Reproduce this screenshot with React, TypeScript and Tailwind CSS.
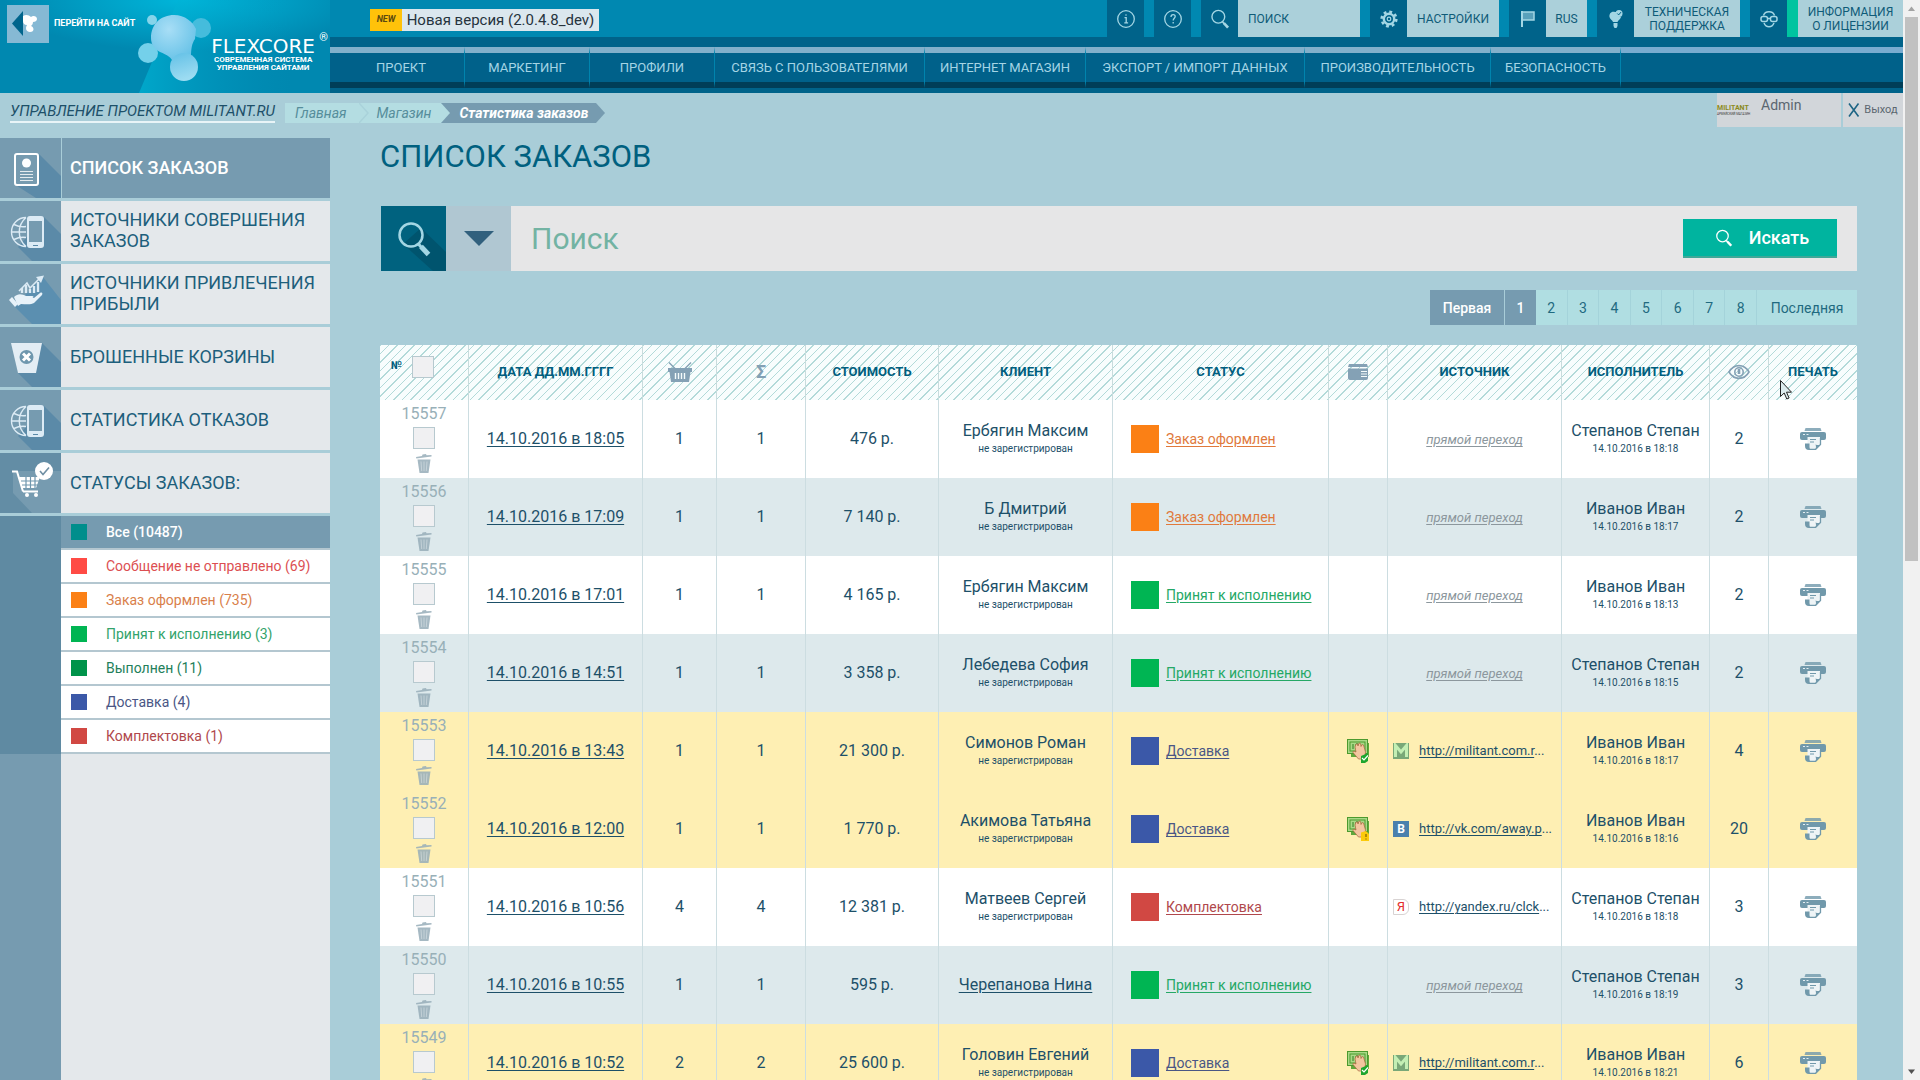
import { useState } from 'react';
import type { ReactNode } from 'react';

type Source = { icon: 'militant' | 'vk' | 'yandex'; label: string } | null;

type Order = {
  id: number;
  date: string;
  items: number;
  total: number;
  price: string;
  client: string;
  registered?: boolean;
  status: keyof typeof statusStyles;
  payment?: 'paid' | 'pending';
  source: Source;
  manager: string;
  managedAt: string;
  views: number;
  tone: keyof typeof rowTones;
};

const statusStyles = {
  'Заказ оформлен': { box: 'bg-[#fb8015]', text: 'text-[#e0793c]' },
  'Принят к исполнению': { box: 'bg-[#00b553]', text: 'text-[#25a866]' },
  'Доставка': { box: 'bg-[#3b58a8]', text: 'text-[#4a5685]' },
  'Комплектовка': { box: 'bg-[#d14843]', text: 'text-[#b0484c]' },
};

const rowTones = {
  white: 'bg-white',
  blue: 'bg-[#dde9ec]',
  yellow: 'bg-[#feefb3]',
};

const militant: Source = { icon: 'militant', label: 'http://militant.com.r' };

const orders: Order[] = [
  { id: 15557, date: '14.10.2016 в 18:05', items: 1, total: 1, price: '476 р.', client: 'Ербягин Максим', status: 'Заказ оформлен', source: null, manager: 'Степанов Степан', managedAt: '14.10.2016 в 18:18', views: 2, tone: 'white' },
  { id: 15556, date: '14.10.2016 в 17:09', items: 1, total: 1, price: '7 140 р.', client: 'Б Дмитрий', status: 'Заказ оформлен', source: null, manager: 'Иванов Иван', managedAt: '14.10.2016 в 18:17', views: 2, tone: 'blue' },
  { id: 15555, date: '14.10.2016 в 17:01', items: 1, total: 1, price: '4 165 р.', client: 'Ербягин Максим', status: 'Принят к исполнению', source: null, manager: 'Иванов Иван', managedAt: '14.10.2016 в 18:13', views: 2, tone: 'white' },
  { id: 15554, date: '14.10.2016 в 14:51', items: 1, total: 1, price: '3 358 р.', client: 'Лебедева София', status: 'Принят к исполнению', source: null, manager: 'Степанов Степан', managedAt: '14.10.2016 в 18:15', views: 2, tone: 'blue' },
  { id: 15553, date: '14.10.2016 в 13:43', items: 1, total: 1, price: '21 300 р.', client: 'Симонов Роман', status: 'Доставка', payment: 'paid', source: militant, manager: 'Иванов Иван', managedAt: '14.10.2016 в 18:17', views: 4, tone: 'yellow' },
  { id: 15552, date: '14.10.2016 в 12:00', items: 1, total: 1, price: '1 770 р.', client: 'Акимова Татьяна', status: 'Доставка', payment: 'pending', source: { icon: 'vk', label: 'http://vk.com/away.p' }, manager: 'Иванов Иван', managedAt: '14.10.2016 в 18:16', views: 20, tone: 'yellow' },
  { id: 15551, date: '14.10.2016 в 10:56', items: 4, total: 4, price: '12 381 р.', client: 'Матвеев Сергей', status: 'Комплектовка', source: { icon: 'yandex', label: 'http://yandex.ru/clck' }, manager: 'Степанов Степан', managedAt: '14.10.2016 в 18:18', views: 3, tone: 'white' },
  { id: 15550, date: '14.10.2016 в 10:55', items: 1, total: 1, price: '595 р.', client: 'Черепанова Нина', registered: true, status: 'Принят к исполнению', source: null, manager: 'Степанов Степан', managedAt: '14.10.2016 в 18:19', views: 3, tone: 'blue' },
  { id: 15549, date: '14.10.2016 в 10:52', items: 2, total: 2, price: '25 600 р.', client: 'Головин Евгений', status: 'Доставка', payment: 'paid', source: militant, manager: 'Иванов Иван', managedAt: '14.10.2016 в 18:21', views: 6, tone: 'yellow' },
];

const menu = [
  { label: 'ПРОЕКТ', width: 'w-[135px] pl-2' },
  { label: 'МАРКЕТИНГ', width: 'w-[125px]' },
  { label: 'ПРОФИЛИ', width: 'w-[125px]' },
  { label: 'СВЯЗЬ С ПОЛЬЗОВАТЕЛЯМИ', width: 'w-[210px]' },
  { label: 'ИНТЕРНЕТ МАГАЗИН', width: 'w-[161px]' },
  { label: 'ЭКСПОРТ / ИМПОРТ ДАННЫХ', width: 'w-[219px]' },
  { label: 'ПРОИЗВОДИТЕЛЬНОСТЬ', width: 'w-[186px]' },
  { label: 'БЕЗОПАСНОСТЬ', width: 'w-[130px]' },
];

const filters = [
  { label: 'Все (10487)', box: 'bg-[#008e8c]', text: 'text-white font-medium', row: 'bg-[#769bb0]' },
  { label: 'Сообщение не отправлено (69)', box: 'bg-[#ff4b45]', text: 'text-[#dc4f52]', row: 'bg-white' },
  { label: 'Заказ оформлен (735)', box: 'bg-[#fb8015]', text: 'text-[#d97f4b]', row: 'bg-white' },
  { label: 'Принят к исполнению (3)', box: 'bg-[#00b553]', text: 'text-[#33a36b]', row: 'bg-white' },
  { label: 'Выполнен (11)', box: 'bg-[#00934a]', text: 'text-[#23805a]', row: 'bg-white' },
  { label: 'Доставка (4)', box: 'bg-[#3b58a8]', text: 'text-[#4a5685]', row: 'bg-white' },
  { label: 'Комплектовка (1)', box: 'bg-[#d14843]', text: 'text-[#b0484c]', row: 'bg-white' },
];

export default function App() {
  return (
    <div className="flex h-screen overflow-hidden bg-[#a9cdd8] font-['Roboto','Liberation_Sans',sans-serif] text-[#1d5069]">
      <div className="flex min-w-0 flex-1 flex-col">
        <Header />
        <Breadcrumbs />
        <div className="flex min-h-0 flex-1">
          <Sidebar />
          <OrdersPage />
        </div>
      </div>
      <Scrollbar />
      <MouseCursor />
    </div>
  );
}

function Header() {
  return (
    <header className="flex h-[93px] shrink-0 bg-[#00638a]">
      <Logo />
      <div className="min-w-0 flex-1">
        <div className="flex h-[37px] items-start justify-between bg-[#0088b1] pl-10">
          <a href="#version" className="mt-[9px] flex h-[22px] items-center bg-[#dbe7ee] text-[#26333d]">
            <span className="flex h-full w-8 items-center justify-center bg-[#ffc20a] text-[9px] font-bold italic text-[#5b4a10]">NEW</span>
            <span className="w-[197px] text-center text-[15px]">Новая версия (2.0.4.8_dev)</span>
          </a>
          <Toolbar />
        </div>
        <nav className="flex pt-[10px]">
          {menu.map((item) => (
            <a
              key={item.label}
              href="#menu"
              className={`${item.width} flex h-[41px] shrink-0 items-center justify-center border-t-6 border-r border-b-6 border-t-[#82b0cb] border-r-[#0084ae] border-b-[#003e58] bg-[#00618a] text-[13px] whitespace-nowrap text-[#a5d5e5]`}
            >
              {item.label}
            </a>
          ))}
          <div className="h-[41px] flex-1 border-t-6 border-b-6 border-t-[#79acd0] border-b-[#003e58] bg-[#00618a]" />
        </nav>
      </div>
    </header>
  );
}

function Logo() {
  return (
    <div className="relative flex w-[330px] shrink-0 overflow-hidden bg-[#0088b0]">
      <svg className="absolute inset-0 h-full w-full" viewBox="0 0 330 93" preserveAspectRatio="none" aria-hidden="true">
        <defs>
          <radialGradient id="logo-glow" cx="0.56" cy="0" r="0.55">
            <stop offset="0" stopColor="#00b6da" />
            <stop offset="1" stopColor="#0088b0" />
          </radialGradient>
          <linearGradient id="logo-beam" x1="0" x2="1">
            <stop offset="0" stopColor="#00bcdc" stopOpacity="0.6" />
            <stop offset="0.8" stopColor="#0096be" stopOpacity="0" />
          </linearGradient>
          <radialGradient id="logo-drop" cx="0.4" cy="0.3" r="0.75">
            <stop offset="0" stopColor="#a8def6" />
            <stop offset="1" stopColor="#62c0e6" />
          </radialGradient>
          <linearGradient id="logo-foot" x1="0" y1="0" x2="0.3" y2="1">
            <stop offset="0" stopColor="#62c0e6" />
            <stop offset="1" stopColor="#9ddcf2" />
          </linearGradient>
        </defs>
        <rect width="330" height="93" fill="url(#logo-glow)" />
        <path d="M178 0H330V93H139Z" fill="url(#logo-beam)" />
        <circle cx="152" cy="20" r="5" fill="#86d4ea" />
        <circle cx="201" cy="28" r="10" fill="#45bcdc" />
        <circle cx="148" cy="53" r="10" fill="#74d0ea" />
        <path d="M151 38c0-14 10-23 23-23 11 0 19 7 22 14l-1 10c-3 4-4 10-4 18l-18 6c-1-6-6-8-13-11-6-3-9-8-9-14Z" fill="url(#logo-drop)" />
        <circle cx="184" cy="67" r="14" fill="url(#logo-foot)" />
      </svg>
      <a href="#site" className="relative mt-[5px] ml-[7px] flex h-[38px] items-center gap-[5px] text-[9px] font-bold text-white">
        <svg className="h-[38px] w-[42px] bg-[#86b9d4]" viewBox="0 0 42 38" aria-hidden="true">
          <path d="M16 6v25L5 18.500Z" fill="#00658c" />
          <path d="M16 11c3-2 6-1 8 1 2-2 6-1 6 2 0 2-2 3-4 3 0 2-1 3-2 4 3 1 4 6-1 6-4 0-5-4-3-7-3 0-4-2-4-4Z" fill="#fff" />
        </svg>
        ПЕРЕЙТИ НА САЙТ
      </a>
      <div className="relative mt-[37px] ml-auto flex flex-col items-center pr-[15px] text-white">
        <span className="font-['DejaVu_Sans',sans-serif] text-xl leading-[19px]">FLEXCORE</span>
        <span className="text-center text-[8px] leading-[8px] font-bold">
          СОВРЕМЕННАЯ СИСТЕМА
          <br />
          УПРАВЛЕНИЯ САЙТАМИ
        </span>
        <span className="absolute -top-[6px] right-[2px] text-[11px] leading-[13px]">®</span>
      </div>
    </div>
  );
}

function IconTile({ children, label }: { children: ReactNode; label: string }) {
  return (
    <button type="button" aria-label={label} className="flex h-[37px] w-[37px] shrink-0 items-center justify-center bg-[#00638a] text-[#a3d6e4]">
      {children}
    </button>
  );
}

function Toolbar() {
  const caption = 'flex h-[37px] items-center justify-center bg-[#abd0da] text-center text-xs leading-[14px] text-[#0f5b78]';

  return (
    <div className="flex shrink-0 gap-[10px]">
      <IconTile label="Информация">
        <svg className="h-5 w-5" viewBox="0 0 20 20" fill="none" stroke="currentColor" strokeWidth="1.3">
          <circle cx="10" cy="10" r="8.300" />
          <path d="M8.500 8.700h1.700v5M8.300 13.800h3.800" />
          <circle cx="10" cy="6" r="0.800" fill="currentColor" stroke="none" />
        </svg>
      </IconTile>
      <IconTile label="Помощь">
        <svg className="h-5 w-5" viewBox="0 0 20 20" fill="none" stroke="currentColor" strokeWidth="1.3">
          <circle cx="10" cy="10" r="8.300" />
          <path d="M8 8c0-3 4.200-3 4.200-.5 0 1.800-2 1.800-2 4" />
          <path d="M10.200 13v1.500" />
        </svg>
      </IconTile>
      <div className="flex">
        <IconTile label="Поиск">
          <LoupeIcon className="h-5 w-5" />
        </IconTile>
        <input type="search" aria-label="Поиск" placeholder="ПОИСК" className="h-[37px] w-[122px] bg-[#abd0da] px-[10px] text-xs outline-none placeholder:text-[#0f5b78]" />
      </div>
      <div className="flex">
        <IconTile label="Настройки">
          <svg className="h-[18px] w-[18px]" viewBox="0 0 18 18" fill="none" stroke="currentColor">
            <circle cx="9" cy="9" r="5.200" strokeWidth="2.400" />
            <circle cx="9" cy="9" r="7.300" strokeWidth="2.600" strokeDasharray="2.870 2.870" />
            <circle cx="9" cy="9" r="1.800" strokeWidth="1.200" />
          </svg>
        </IconTile>
        <a href="#settings" className={`${caption} w-[92px]`}>НАСТРОЙКИ</a>
      </div>
      <div className="flex">
        <IconTile label="Язык">
          <svg className="h-[18px] w-4" viewBox="0 0 16 18" fill="none" stroke="currentColor">
            <path d="M2 1v16" strokeWidth="2" />
            <path d="M2 2h12v8H2" fill="currentColor" fillOpacity="0.550" strokeWidth="1.500" />
          </svg>
        </IconTile>
        <button type="button" className={`${caption} w-[41px]`}>RUS</button>
      </div>
      <div className="flex">
        <IconTile label="Поддержка">
          <svg className="h-5 w-4" viewBox="0 0 16 20" fill="currentColor">
            <path d="M7 3C3 2 1 5 1.500 8c.5 2.500 3 3 3.500 5h4.500c.5-2 3-2.500 3.500-5a5 5 0 0 1-5-5Z" />
            <circle cx="11" cy="4.500" r="3.500" />
            <path d="M9.300 4.500l1.400 1.400 2.300-2.800" fill="none" stroke="#00638a" />
            <path d="M5.500 14h4v3l-1 2h-2l-1-2Z" />
          </svg>
        </IconTile>
        <a href="#support" className={`${caption} w-[106px]`}>
          ТЕХНИЧЕСКАЯ
          <br />
          ПОДДЕРЖКА
        </a>
      </div>
      <div className="flex">
        <IconTile label="Лицензия">
          <svg className="h-[18px] w-[18px]" viewBox="0 0 18 18" fill="none" stroke="currentColor" strokeWidth="1.500">
            <path d="M3.500 5.500C5 .5 13 .5 14.500 5.500M4 13c2 5 8 5 10 0" />
            <rect x="1" y="6.500" width="6.500" height="5" rx="2" />
            <rect x="10.500" y="6.500" width="6.500" height="5" rx="2" />
            <path d="M7.500 8.500h3" />
          </svg>
        </IconTile>
        <a href="#license" className={`${caption} w-[116px] border-l-[11px] border-[#00c4a0]`}>
          ИНФОРМАЦИЯ
          <br />
          О ЛИЦЕНЗИИ
        </a>
      </div>
    </div>
  );
}

function Breadcrumbs() {
  return (
    <div className="flex h-[45px] shrink-0 items-start">
      <a href="#project" className="mt-2 ml-[10px] border-b-2 border-[#e8f4f7] text-[15px] leading-5 whitespace-nowrap italic">
        УПРАВЛЕНИЕ ПРОЕКТОМ MILITANT.RU
      </a>
      <nav className="mt-[10px] ml-[10px] flex h-5 text-sm leading-5 italic">
        <a href="#home" className="bg-[#b4dde2] pr-3 pl-[10px] text-[#568d9b]">Главная</a>
        <CrumbArrow from="#b4dde2" to="#b4dde2" />
        <a href="#shop" className="bg-[#b4dde2] pr-[10px] pl-2 text-[#568d9b]">Магазин</a>
        <CrumbArrow from="#b4dde2" to="#769bb0" />
        <a href="#stats" className="bg-[#769bb0] px-2 font-bold text-white">Статистика заказов</a>
        <CrumbArrow from="#769bb0" to="transparent" />
      </nav>
      <div className="ml-auto flex h-[34px] gap-[2px] text-[#5b6670]">
        <div className="flex w-[124px] bg-[#d2d6da]">
          <div className="flex w-[34px] shrink-0 flex-col justify-center text-[#8b8a1c]">
            <span className="text-[7px] leading-[8px] font-bold">MILITANT</span>
            <span className="text-[3px] leading-[4px] whitespace-nowrap text-[#3c3c3c]">АРМЕЙСКИЙ МАГАЗИН</span>
          </div>
          <span className="pt-1 pl-[10px] text-sm leading-4">Admin</span>
        </div>
        <a href="#logout" className="flex w-[60px] items-center justify-center gap-1 bg-[#d2d6da] text-[11px]">
          <svg className="h-[14px] w-3" viewBox="0 0 12 14" fill="none" stroke="#1d6484" strokeWidth="1.600">
            <path d="M1 0.500l9.500 13M10.500 0.500L1 13.500" />
          </svg>
          Выход
        </a>
      </div>
    </div>
  );
}

function CrumbArrow({ from, to }: { from: string; to: string }) {
  return (
    <svg className="h-5 w-[10px]" viewBox="0 0 10 20" aria-hidden="true">
      <rect width="10" height="20" fill={to} />
      <path d="M0 0L9 10L0 20Z" fill={from} />
      <path d="M0 0L9 10L0 20" fill="none" stroke="#a9d2da" strokeWidth={to === from ? 1.5 : 0} />
    </svg>
  );
}

const sections = [
  { label: 'СПИСОК ЗАКАЗОВ', icon: 'list', active: true },
  { label: 'ИСТОЧНИКИ СОВЕРШЕНИЯ ЗАКАЗОВ', icon: 'globe' },
  { label: 'ИСТОЧНИКИ ПРИВЛЕЧЕНИЯ ПРИБЫЛИ', icon: 'profit' },
  { label: 'БРОШЕННЫЕ КОРЗИНЫ', icon: 'bin' },
  { label: 'СТАТИСТИКА ОТКАЗОВ', icon: 'globe' },
  { label: 'СТАТУСЫ ЗАКАЗОВ:', icon: 'cart' },
];

function Sidebar() {
  return (
    <aside className="flex w-[330px] shrink-0 flex-col">
      {sections.map((section) => (
        <a key={section.label} href="#section" className="mb-[3px] flex h-[60px] shrink-0">
          <SectionIcon name={section.icon} />
          <span
            className={`flex flex-1 items-center pb-[2px] text-lg leading-[21px] ${
              section.active ? 'border-l border-[#a9cdd8] bg-[#769bb0] pl-2 font-medium text-white' : 'bg-[#e4e8eb] pl-[9px] text-[#1d5f7c]'
            }`}
          >
            {section.label}
          </span>
        </a>
      ))}
      <ul className="shrink-0 bg-[#5f8aa2] pl-[61px]">
        {filters.map((filter) => (
          <li key={filter.label} className={`border-b-2 border-[#b4c7d0] ${filter.row}`}>
            <a href="#filter" className={`flex h-8 items-center gap-[19px] pb-px pl-[10px] text-sm ${filter.text}`}>
              <span className={`h-4 w-4 ${filter.box}`} />
              {filter.label}
            </a>
          </li>
        ))}
      </ul>
      <div className="flex-1 border-l-[61px] border-[#769bb0] bg-[#e4e8eb]" />
    </aside>
  );
}

function SectionIcon({ name }: { name: string }) {
  return (
    <svg className="h-[60px] w-[61px] shrink-0 bg-[#769bb0]" viewBox="0 0 61 60" aria-hidden="true">
      {name === 'cart' && <path d="M0 0h61v18H13v22l19 20H0Z" fill="#5f8aa2" fillOpacity="0.800" />}
      {name === 'list' && (
        <>
          <path d="M39 16L61 38V60H36L14 46Z" fill="#5b8aa8" />
          <rect x="15" y="16" width="23" height="31" rx="2" fill="#769bb0" stroke="#fff" strokeWidth="2" />
          <circle cx="26.500" cy="25" r="4.500" fill="#fff" />
          <path d="M20 33.500h13M20 36.500h13M20 39.500h13M20 42.500h13" stroke="#fff" strokeOpacity="0.800" />
        </>
      )}
      {name === 'globe' && (
        <>
          <path d="M44 16L61 33V60H32L18 46Z" fill="#5b8aa8" />
          <g fill="none" stroke="#dcebf5" strokeWidth="1.400">
            <path d="M26 16.500a14.500 14.500 0 0 0 0 29M26 16.500c-9 8-9 21 0 29M11 31h15M14 23.500q6 3 12 2M14 38.500q6-3 12-2" />
          </g>
          <rect x="27" y="15" width="17" height="32" rx="3" fill="#dcebf5" />
          <rect x="29" y="20" width="13" height="21" fill="#769bb0" />
          <path d="M33 44.500h5" stroke="#5b8aa8" />
        </>
      )}
      {name === 'profit' && (
        <>
          <path d="M43 13L61 36V60H32L14 42Z" fill="#5b8fb0" />
          <g fill="none" stroke="#dcebf5" strokeWidth="1.500">
            <path d="M19 27l8-8 3 5 9-9" />
            <path d="M22 29v-5M26 29v-8M30 29v-4M34 29v-7M38 28V18" strokeWidth="2.400" />
          </g>
          <path d="M36 13l8-1.500-3 7.500Z" fill="#dcebf5" />
          <path d="M14 33c4-4 8-3 12-1h6c2 0 2 2 0 2h-6 8l6-5c2-1 3 0 2 2l-8 8c-3 2-9 1-13 1l-3 2Z" fill="#e8f2f9" />
          <path d="M9 36l3-3 6 7-3 3Z" fill="#e8f2f9" />
        </>
      )}
      {name === 'bin' && (
        <>
          <path d="M42 16L61 35V60H32L18 46Z" fill="#5b8aa8" />
          <path d="M11 16H42L36 46H18Z" fill="#e3edf4" />
          <circle cx="26.500" cy="30" r="7" fill="#6e97ae" />
          <path d="M23 26.500l7 7M30 26.500l-7 7" stroke="#fff" strokeWidth="3" />
        </>
      )}
      {name === 'cart' && (
        <>
          <path d="M12 18.500h5l6 20" fill="none" stroke="#fff" strokeWidth="2" />
          <path d="M19 24h21l-4 11H22Z" fill="#fff" />
          <path d="M21 28h18M22 32h16M26 24v11M30.500 24v11M35 24v11" stroke="#6f97ae" strokeWidth="1.200" />
          <path d="M23 38.500h15" stroke="#fff" strokeWidth="2" />
          <circle cx="27" cy="42" r="2" fill="#fff" />
          <circle cx="36" cy="42" r="2" fill="#fff" />
          <circle cx="44" cy="18" r="9" fill="#fff" />
          <path d="M40 18l3 3.500 6-7" fill="none" stroke="#6f8fa3" strokeWidth="1.600" />
        </>
      )}
    </svg>
  );
}

function OrdersPage() {
  const [query, setQuery] = useState('');
  const [checked, setChecked] = useState<number[]>([]);

  const toggle = (id: number) => {
    setChecked((prev) => (prev.includes(id) ? prev.filter((item) => item !== id) : [...prev, id]));
  };

  const allChecked = checked.length === orders.length;

  return (
    <main className="min-w-0 flex-1 pr-[46px] pl-[50px]">
      <h1 className="text-[31px] leading-[38px] text-[#00607f]">СПИСОК ЗАКАЗОВ</h1>

      <form className="mt-[30px] ml-px flex h-[65px] items-center bg-[#e6e6e7]" onSubmit={(event) => event.preventDefault()}>
        <span className="relative flex h-[65px] w-[65px] items-center justify-center overflow-hidden bg-[#00627f] text-[#a3d6e4]">
          <svg className="absolute inset-0 h-full w-full" viewBox="0 0 65 65" aria-hidden="true">
            <path d="M40 22L65 46V65H52L22 38Z" fill="#00546e" />
          </svg>
          <LoupeIcon className="relative h-9 w-9" />
        </span>
        <button type="button" aria-label="Параметры поиска" className="flex h-[65px] w-[65px] items-center justify-center bg-[#b0c7d2]">
          <svg className="h-[15px] w-[30px]" viewBox="0 0 30 15">
            <path d="M0 0h30L15 15Z" fill="#31607d" />
          </svg>
        </button>
        <input
          aria-label="Поиск"
          placeholder="Поиск"
          value={query}
          onChange={(event) => setQuery(event.target.value)}
          className="h-full min-w-0 flex-1 px-5 text-3xl outline-none placeholder:text-[#73b3a3]"
        />
        <button type="submit" className="mr-5 flex h-[39px] w-[154px] items-center justify-center gap-4 border-b-2 border-[#3ea898] bg-[#00b49f] pl-1 text-lg font-medium text-white">
          <LoupeIcon className="h-[18px] w-[18px]" />
          Искать
        </button>
      </form>

      <nav className="mt-[19px] flex h-[35px] justify-end text-sm text-[#1f6a80]">
        <a href="#first" className="flex w-[75px] items-center justify-center border-r border-[#a9cdd8] bg-[#769bb0] font-medium text-white">Первая</a>
        <a href="#page" className="flex w-[31px] items-center justify-center bg-[#769bb0] font-medium text-white">1</a>
        <div className="flex w-[221px]">
          {[2, 3, 4, 5, 6, 7, 8].map((page) => (
            <a key={page} href="#page" className="flex flex-1 items-center justify-center border-r border-[#a4d3da] bg-[#b0dee2]">
              {page}
            </a>
          ))}
        </div>
        <a href="#last" className="flex w-[100px] items-center justify-center bg-[#b0dee2]">Последняя</a>
      </nav>

      <table className="mt-5 w-full table-fixed border-separate border-spacing-0 text-center text-base">
        <colgroup>
          <col className="w-[89px]" />
          <col className="w-[174px]" />
          <col className="w-[74px]" />
          <col className="w-[89px]" />
          <col className="w-[133px]" />
          <col className="w-[174px]" />
          <col className="w-[216px]" />
          <col className="w-[59px]" />
          <col className="w-[174px]" />
          <col className="w-[148px]" />
          <col className="w-[59px]" />
          <col className="w-[88px]" />
        </colgroup>
        <thead className="bg-[repeating-linear-gradient(135deg,#b3dad9_0px,#b3dad9_1px,#f8fdfd_1px,#f8fdfd_6px)] text-[13px] text-[#005e7e]">
          <tr className="h-[55px]">
            <th className="border-r border-[#c9dcdd] pb-3">
              <label className="flex items-center gap-[10px] pl-[11px] text-[11px]">
                №
                <Checkbox label="Выбрать все" checked={allChecked} onChange={() => setChecked(allChecked ? [] : orders.map((order) => order.id))} />
              </label>
            </th>
            <HeadCell>ДАТА ДД.ММ.ГГГГ</HeadCell>
            <HeadCell>
              <svg className="mx-auto h-5 w-6" viewBox="0 0 24 20" fill="#84a1b5" aria-label="Товары">
                <path d="M1.500 0l7 7h-2L.5 1ZM22.500 0l-7 7h2L23.500 1Z" />
                <path d="M0 6h24v4h-1.500L21 20H3L1.500 10H0Z" />
                <path d="M7.500 11v6M10.500 11v6M13.500 11v6M16.500 11v6" stroke="#f4fbfb" strokeWidth="1.400" />
              </svg>
            </HeadCell>
            <HeadCell>
              <span className="text-lg text-[#84a1b5]">Σ</span>
            </HeadCell>
            <HeadCell>СТОИМОСТЬ</HeadCell>
            <HeadCell>КЛИЕНТ</HeadCell>
            <HeadCell>СТАТУС</HeadCell>
            <HeadCell>
              <svg className="mx-auto h-4 w-5" viewBox="0 0 20 16" fill="#84a1b5" aria-label="Оплата">
                <path d="M1 0h18l1 3H0ZM0 4.500h20V14a2 2 0 0 1-2 2H2a2 2 0 0 1-2-2Z" />
                <path d="M13 7.500h6M13 10h6M13 12.500h6" stroke="#f4fbfb" strokeWidth="1.200" />
              </svg>
            </HeadCell>
            <HeadCell>ИСТОЧНИК</HeadCell>
            <HeadCell>ИСПОЛНИТЕЛЬ</HeadCell>
            <HeadCell>
              <svg className="mx-auto h-4 w-[22px]" viewBox="0 0 22 16" fill="none" stroke="#84a1b5" aria-label="Просмотры">
                <path d="M1 8C6-.5 16-.5 21 8 16 16.500 6 16.500 1 8Z" strokeWidth="1.600" />
                <circle cx="11" cy="8" r="4.200" strokeWidth="1.600" />
                <path d="M11 5v5" strokeWidth="2.600" />
              </svg>
            </HeadCell>
            <th className="pb-[2px]">ПЕЧАТЬ</th>
          </tr>
        </thead>
        <tbody>
          {orders.map((order) => (
            <OrderRow key={order.id} order={order} checked={checked.includes(order.id)} onToggle={() => toggle(order.id)} />
          ))}
        </tbody>
      </table>
    </main>
  );
}

function HeadCell({ children }: { children: ReactNode }) {
  return <th className="border-r border-[#c9dcdd] pb-[2px]">{children}</th>;
}

function Cell({ children, className = '' }: { children?: ReactNode; className?: string }) {
  return <td className={`border-r border-[#ccdde1] ${className}`}>{children}</td>;
}

function Checkbox({ label, checked, onChange }: { label: string; checked: boolean; onChange: () => void }) {
  return (
    <input
      type="checkbox"
      aria-label={label}
      checked={checked}
      onChange={onChange}
      className="block h-[22px] w-[22px] appearance-none border border-[#b7c9cf] bg-[#f0f0f2] checked:bg-[#769bb0]"
    />
  );
}

function OrderRow({ order, checked, onToggle }: { order: Order; checked: boolean; onToggle: () => void }) {
  const status = statusStyles[order.status];

  return (
    <tr className={`h-[78px] ${rowTones[order.tone]}`}>
      <Cell>
        <div className="flex h-[78px] flex-col items-center pt-[3px] text-[#98b0b8]">
          <span className="leading-[22px]">{order.id}</span>
          <span className="mt-[2px]">
            <Checkbox label={`Заказ ${order.id}`} checked={checked} onChange={onToggle} />
          </span>
          <button type="button" aria-label="Удалить" className="mt-[5px]">
            <svg className="block h-[19px] w-4" viewBox="0 0 16 19" fill="#97adb9" fillOpacity="0.850">
              <path d="M0 3l6-1 .5-1.500L10 0l.5 1.200L15.500 1v1.500L.3 4.500Z" />
              <path d="M1.500 5.500h13L12.500 19h-9Z" />
              <path d="M5 7.500l.7 9.500M8 7.500V17M11 7.500l-.7 9.500" stroke="#fff" strokeOpacity="0.450" strokeWidth="0.800" />
            </svg>
          </button>
        </div>
      </Cell>
      <Cell>
        <a href="#order" className="underline underline-offset-2">{order.date}</a>
      </Cell>
      <Cell>{order.items}</Cell>
      <Cell>{order.total}</Cell>
      <Cell>{order.price}</Cell>
      <Cell>
        {order.registered ? (
          <a href="#client" className="underline underline-offset-2">{order.client}</a>
        ) : (
          <>
            <div className="leading-5">{order.client}</div>
            <div className="pb-px text-[10px] leading-4">не зарегистрирован</div>
          </>
        )}
      </Cell>
      <Cell className="pl-[18px]">
        <div className="flex items-center gap-[7px] text-sm">
          <span className={`h-7 w-7 ${status.box}`} />
          <a href="#status" className={`underline underline-offset-2 ${status.text}`}>{order.status}</a>
        </div>
      </Cell>
      <Cell>{order.payment && <MoneyIcon kind={order.payment} />}</Cell>
      <Cell>
        {order.source ? (
          <div className="flex items-center gap-[10px] pl-[5px] text-[13px] whitespace-nowrap">
            <SourceIcon name={order.source.icon} />
            <span>
              <a href="#source" className="underline underline-offset-2">{order.source.label}</a>...
            </span>
          </div>
        ) : (
          <a href="#source" className="text-[13px] text-[#8c979d] italic underline underline-offset-2">прямой переход</a>
        )}
      </Cell>
      <Cell>
        <div className="leading-5">{order.manager}</div>
        <div className="pb-px text-[10px] leading-4">{order.managedAt}</div>
      </Cell>
      <Cell>{order.views}</Cell>
      <td>
        <button type="button" aria-label="Печать" className="block mx-auto">
          <svg className="block h-[22px] w-[26px]" viewBox="0 0 26 22" fill="#7199ab">
            <path d="M5.500 0h15l1 3h-17Z" opacity="0.800" />
            <path d="M2 4h22a2 2 0 0 1 2 2v4a2 2 0 0 1-2 2H2a2 2 0 0 1-2-2V6a2 2 0 0 1 2-2Z" />
            <path d="M3 6.500h2M6.500 6.500h2" stroke="#e4eef2" strokeWidth="1.200" />
            <path d="M7.500 9H20v7l-5 5.500h-4.500a3 3 0 0 1-3-3Z" fill="#eef4f6" />
            <path d="M5 15.500h4.500V19a3 3 0 0 0 3 3H9a4 4 0 0 1-4-4Z" />
            <path d="M20.500 10v6.500L15.500 21.500H10" fill="none" stroke="#7199ab" strokeWidth="1.300" />
            <path d="M15 21.500c1.500-1.500 1-3.500.5-5 2 .8 3.500.8 5 0Z" />
            <path d="M10 11.500h6M10 14h4" stroke="#7199ab" strokeWidth="1.200" />
          </svg>
        </button>
      </td>
    </tr>
  );
}

function LoupeIcon({ className }: { className: string }) {
  return (
    <svg className={className} viewBox="0 0 36 36" fill="none" stroke="currentColor" aria-hidden="true">
      <circle cx="15" cy="14" r="11.500" strokeWidth="2.500" />
      <path d="M22.500 23l3 3.500" strokeWidth="3" />
      <path d="M25 25.500l7.500 8" strokeWidth="5" />
    </svg>
  );
}

function MoneyIcon({ kind }: { kind: 'paid' | 'pending' }) {
  return (
    <svg className="mx-auto h-6 w-6" viewBox="0 0 24 24" aria-label="Оплата">
      <path d="M5 4h18v14H5Z" fill="#5fa83c" />
      <rect x="1.500" y="0.500" width="20" height="14" fill="#a8d987" stroke="#4c9a2e" />
      <rect x="4" y="3" width="15" height="9" fill="none" stroke="#4c9a2e" />
      <path d="M7 5v5M10 5h2v5h-2Z" stroke="#2e7d1e" fill="none" />
      <path d="M9 8l1-3 1.500 0 .5 2 1-3 1.500.5.500 3 1-2 1.500.5 2 7-1 7h-6L7 13.500l.5-1.500 2.500 1Z" fill="#f3c6a0" stroke="#a8653c" strokeWidth="0.700" />
      {kind === 'paid' ? (
        <>
          <path d="M15 17l7-3v8l-3 2h-4Z" fill="#1fa62e" />
          <path d="M16 19l2 2 4-4.500" fill="none" stroke="#fff" strokeWidth="1.200" />
        </>
      ) : (
        <>
          <path d="M15 15.500l5-1.500 3 3v7h-8Z" fill="#fccb0a" />
          <path d="M20 17v3M20 21.500v1" stroke="#6b4a00" />
        </>
      )}
    </svg>
  );
}

function SourceIcon({ name }: { name: 'militant' | 'vk' | 'yandex' }) {
  if (name === 'militant') {
    return (
      <svg className="h-4 w-4" viewBox="0 0 16 16" aria-hidden="true">
        <path d="M0 0h16v16H0Z" fill="#79a878" />
        <path d="M2.500 14V2.500L8 9l5.500-6.500V14" fill="none" stroke="#c3efb4" strokeWidth="3" />
      </svg>
    );
  }
  if (name === 'vk') {
    return <span className="flex h-4 w-4 items-center justify-center bg-[#4a80ad] text-xs leading-4 font-bold text-white">B</span>;
  }
  return (
    <span className="flex h-4 w-4 items-center justify-center rounded-r-md border border-[#d8d3d3] bg-white text-[13px] leading-[14px] text-[#e32d2d]">Я</span>
  );
}

function Scrollbar() {
  return (
    <div className="flex w-[17px] shrink-0 flex-col items-center justify-between bg-[#f1f1f1]" aria-hidden="true">
      <svg className="h-[17px] w-[17px] shrink-0" viewBox="0 0 17 17">
        <path d="M5 11l3.500-4.500L12 11Z" fill="#a3a3a3" />
      </svg>
      <div className="flex w-[13px] flex-1 flex-col">
        <div className="h-[52%] bg-[#c1c1c1]" />
      </div>
      <svg className="h-[17px] w-[17px] shrink-0" viewBox="0 0 17 17">
        <path d="M5 6.500L8.500 11 12 6.500Z" fill="#505050" />
      </svg>
    </div>
  );
}

function MouseCursor() {
  return (
    <svg className="pointer-events-none absolute top-[380px] left-[1780px] h-5 w-3" viewBox="0 0 12 20" aria-hidden="true">
      <path d="M0.500 0.500v16l3.700-3.500 2.600 6 2.300-1-2.600-5.800h5Z" fill="#dcebed" stroke="#222" />
    </svg>
  );
}
